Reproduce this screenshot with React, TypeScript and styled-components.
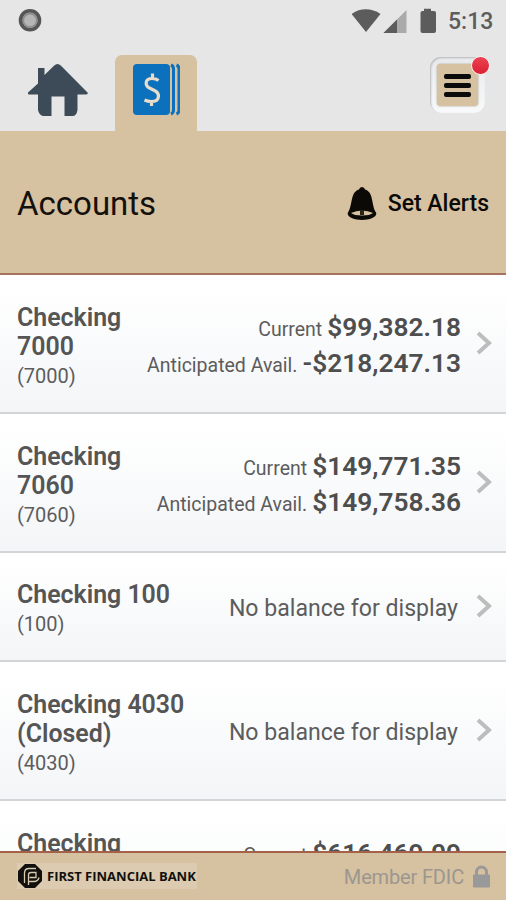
import React from "react";
import styled, { createGlobalStyle } from "styled-components";

const GlobalStyle = createGlobalStyle`
  * { box-sizing: border-box; }
  body { margin: 0; background: #e6e6e6; font-family: Roboto, "Liberation Sans", sans-serif; }
`;

const Screen = styled.div`
  width: 506px;
  height: 900px;
  display: flex;
  flex-direction: column;
  overflow: hidden;
  background: #e6e6e6;
`;

const StatusBar = styled.div`
  flex: none;
  height: 42px;
  padding: 0 13px 0 18px;
  display: flex;
  justify-content: space-between;
  align-items: center;
`;

const StatusIcons = styled.div`
  display: flex;
  align-items: center;
`;

const Clock = styled.span`
  width: 45px;
  margin-left: 10px;
  padding-top: 1px;
  font-size: 23px;
  line-height: 44px;
  font-weight: 500;
  color: #5c5c5c;
  white-space: nowrap;
`;

const TabBar = styled.nav`
  flex: none;
  height: 89px;
  padding: 13px 21px 0 0;
  display: flex;
`;

const Tab = styled.div<{ $active?: boolean; $width: number }>`
  width: ${(p) => p.$width}px;
  height: 76px;
  display: flex;
  align-items: flex-start;
  justify-content: center;
  padding-top: 8px;
  border-radius: 7px 7px 0 0;
  background: ${(p) => (p.$active ? "#d6c1a1" : "transparent")};
`;

const MenuButton = styled.div`
  position: relative;
  width: 55px;
  height: 56px;
  margin: 2px 0 0 auto;
  padding: 7px;
  border-radius: 11px;
  background: linear-gradient(#e9eaeb, #f8f9fa);
  box-shadow: inset 1px 1px 2px #b5b7b9;
`;

const MenuFace = styled.div`
  height: 42px;
  border-radius: 4px;
  background: #d6c1a1;
  box-shadow: 0 0 2px #9c9484;
  display: flex;
  flex-direction: column;
  align-items: center;
  justify-content: center;
  gap: 4px;
`;

const MenuLine = styled.span`
  width: 27px;
  height: 5px;
  border-radius: 2px;
  background: #0b0b0b;
`;

const Badge = styled.span`
  position: absolute;
  top: -1px;
  right: -5px;
  width: 19px;
  height: 19px;
  border-radius: 50%;
  border: 1px solid #f8f0f0;
  background: linear-gradient(#ec4354, #dc2034);
`;

const Header = styled.header`
  flex: none;
  height: 144px;
  padding: 3px 17px 0;
  display: flex;
  align-items: center;
  justify-content: space-between;
  background: #d6c1a1;
  border-bottom: 2px solid #a5705c;
`;

const Title = styled.h1`
  margin: 0;
  font-size: 33px;
  font-weight: 400;
  color: #14110c;
`;

const AlertsLink = styled.div`
  display: flex;
  align-items: center;
  gap: 11px;
  font-size: 23px;
  font-weight: 500;
  color: #0c0a07;
  white-space: nowrap;
`;

const List = styled.main`
  flex: 1;
  min-height: 0;
  overflow: hidden;
  background: #fff;
`;

const Row = styled.section<{ $height: number }>`
  height: ${(p) => p.$height}px;
  padding: 0 14px 0 17px;
  display: flex;
  align-items: center;
  border-bottom: 2px solid #d3d6d8;
  background: linear-gradient(#ffffff 10%, #f3f5f7);
`;

const Name = styled.div<{ $width: number }>`
  width: ${(p) => p.$width}px;
  flex: none;
  padding-top: 6px;
`;

const AccountName = styled.div`
  font-size: 24.9px;
  line-height: 29px;
  font-weight: 600;
  color: #555;
`;

const AccountNumber = styled.div`
  font-size: 20px;
  line-height: 30px;
  color: #5c5c5c;
`;

const Balances = styled.div`
  flex: 1;
  display: flex;
  flex-direction: column;
  align-items: flex-end;
  padding-top: 4px;
  white-space: nowrap;
`;

const BalanceLine = styled.div`
  height: 35.5px;
  display: flex;
  align-items: baseline;
  gap: 5px;
  line-height: 35px;
`;

const BalanceLabel = styled.span`
  font-size: 19.5px;
  color: #5c5c5c;
`;

const Amount = styled.span`
  font-size: 26.3px;
  font-weight: 600;
  color: #4e4e4e;
`;

const NoBalance = styled.div`
  margin: -1px 3px 0 0;
  font-size: 23.1px;
  color: #5c5c5c;
`;

const Chevron = styled.svg`
  flex: none;
  width: 16px;
  height: 24px;
  margin: 0 0 1px 15px;
`;

const Footer = styled.footer`
  flex: none;
  height: 49px;
  padding: 0 16px 0 17px;
  display: flex;
  align-items: center;
  justify-content: space-between;
  border-top: 2px solid #a5604a;
  background: #d6c1a1;
`;

const Brand = styled.div`
  display: flex;
  align-items: center;
  gap: 4px;
  padding-right: 1px;
  margin-bottom: 2px;
  background: #dccbb0;
  font-family: "Open Sans", "Noto Sans", sans-serif;
  font-size: 13px;
  line-height: 22px;
  font-weight: 700;
  letter-spacing: 0;
  color: #11100d;
  white-space: nowrap;
`;

const Member = styled.div`
  display: flex;
  align-items: center;
  gap: 9px;
  font-size: 20px;
  letter-spacing: -0.15px;
  color: #9b978f;
  white-space: nowrap;
`;

type Account = {
  name: string;
  number: string;
  height: number;
  nameWidth: number;
  balances?: [string, string][];
};

const accounts: Account[] = [
  { name: "Checking 7000", number: "(7000)", height: 139, nameWidth: 120, balances: [["Current", "$99,382.18"], ["Anticipated Avail.", "-$218,247.13"]] },
  { name: "Checking 7060", number: "(7060)", height: 139, nameWidth: 120, balances: [["Current", "$149,771.35"], ["Anticipated Avail.", "$149,758.36"]] },
  { name: "Checking 100", number: "(100)", height: 109, nameWidth: 200 },
  { name: "Checking 4030 (Closed)", number: "(4030)", height: 139, nameWidth: 200 },
  { name: "Checking 7080", number: "(7080)", height: 139, nameWidth: 120, balances: [["Current", "$616,469.09"], ["Anticipated Avail.", "$616,469.09"]] },
];

const AccountRow = ({ account }: { account: Account }) => (
  <Row $height={account.height}>
    <Name $width={account.nameWidth}>
      <AccountName>{account.name}</AccountName>
      <AccountNumber>{account.number}</AccountNumber>
    </Name>
    <Balances>
      {account.balances ? (
        account.balances.map(([label, value]) => (
          <BalanceLine key={label}>
            <BalanceLabel>{label}</BalanceLabel>
            <Amount>{value}</Amount>
          </BalanceLine>
        ))
      ) : (
        <NoBalance>No balance for display</NoBalance>
      )}
    </Balances>
    <Chevron viewBox="0 0 16 24" fill="none" stroke="#bdbdbd" strokeWidth="4">
      <path d="M2 2 13 12 2 22" />
    </Chevron>
  </Row>
);

export default function App() {
  return (
    <>
      <GlobalStyle />
      <Screen>
        <StatusBar>
          <svg width="24" height="24" viewBox="0 0 24 24">
            <circle cx="12" cy="11.300" r="9.500" fill="#a9a9a9" stroke="#565656" strokeWidth="3.6" />
            <circle cx="12" cy="11.300" r="6.7" fill="#b5b5b5" stroke="#8e8e8e" strokeWidth="1.6" />
          </svg>
          <StatusIcons>
            <svg width="86" height="26" viewBox="0 0 86 26">
              <path d="M.5 6C9-.2 20.500-.2 29.500 6L15 24Z" fill="#5c5c5c" transform="translate(-1 0)" />
              <path d="M54.500 2V25H31.500Z" fill="#aaa" />
              <path d="M45 11.500V25H31.500Z" fill="#5c5c5c" />
              <path d="M70 3h3V.8h7V3h3q2 0 2 2v18q0 2-2 2H71.500q-2 0-2-2V5q0-2 2-2Z" fill="#5c5c5c" transform="translate(-1 0)" />
            </svg>
            <Clock>5:13</Clock>
          </StatusIcons>
        </StatusBar>
        <TabBar>
          <Tab $width={115}>
            <svg width="60" height="54" viewBox="0 0 60 54">
              <path d="M10 5h6.500v7L26 2.800q3.500-3.400 7 0L59.500 29.500q1 2-2 2H49.500V47q-1 6-5 6H36.500V33.500H23.500V53H15q-4-1-5-6V31.500H2q-3 0-2-2l10-9Z" fill="#3c4b57" />
            </svg>
          </Tab>
          <Tab $width={82} $active>
            <svg width="48" height="53" viewBox="-1 0 48 53">
              <rect x="0" y="1" width="37" height="51" rx="4" fill="#0b71bd" />
              <path d="M38 2q2.500 1 2.500 4v41q0 3-2.500 4M43.500 2q2.500 1 2.500 4v41q0 3-2.500 4" fill="none" stroke="#0b71bd" strokeWidth="3" />
              <path d="M25.500 17.500Q23 15.500 19 15.500C11.500 15.500 11.500 23 17.500 25.500L21 27.200C27.500 30.200 27 38.500 18.500 38.500Q14.500 38.500 11.500 37M19.500 10.500v5M18.500 38.500v4.500" fill="none" stroke="#e8dccb" strokeWidth="3.200" />
            </svg>
          </Tab>
          <MenuButton>
            <MenuFace>
              <MenuLine />
              <MenuLine />
              <MenuLine />
            </MenuFace>
            <Badge />
          </MenuButton>
        </TabBar>
        <Header>
          <Title>Accounts</Title>
          <AlertsLink>
            <svg width="30" height="34" viewBox="0 0 30 34">
              <path d="M15 0q2.500 0 3 2.500C27 5 24 18 29 25.500 31 30 23 33 15 33S-1 30 1 25.500C6 18 3 5 12 2.500Q12.500 0 15 0Z" fill="#0c0a07" />
              <path d="M4 26q5-2.500 11-2.500t11 2.500q-3 2.500-11 2.500T4 26Z" fill="#d6c1a1" />
              <path d="M13 23h4v5h-4Z" fill="#2b2519" />
            </svg>
            <span>Set Alerts</span>
          </AlertsLink>
        </Header>
        <List>
          {accounts.map((account) => (
            <AccountRow key={account.name} account={account} />
          ))}
        </List>
        <Footer>
          <Brand>
            <svg width="26" height="26" viewBox="0 0 26 26" fill="none">
              <path d="M8 1h10l7 7v10l-7 7H8l-7-7V8Z" fill="#11100d" />
              <path d="M7.500 20V10q0-4.500 4.500-4.500h7M11.500 22V12q0-2.500 2.500-2.500h5v5h-6.500M12 18.500h5q4 0 5-4" stroke="#d6c8b1" strokeWidth="1.300" />
            </svg>
            <span>FIRST FINANCIAL BANK</span>
          </Brand>
          <Member>
            <span>Member FDIC</span>
            <svg width="17" height="23" viewBox="0 0 17 23">
              <path d="M3.500 10V7a5 5 0 0 1 10 0v3" fill="none" stroke="#999" strokeWidth="3" />
              <rect y="9.500" width="17" height="13" rx="1" fill="#999" />
            </svg>
          </Member>
        </Footer>
      </Screen>
    </>
  );
}
